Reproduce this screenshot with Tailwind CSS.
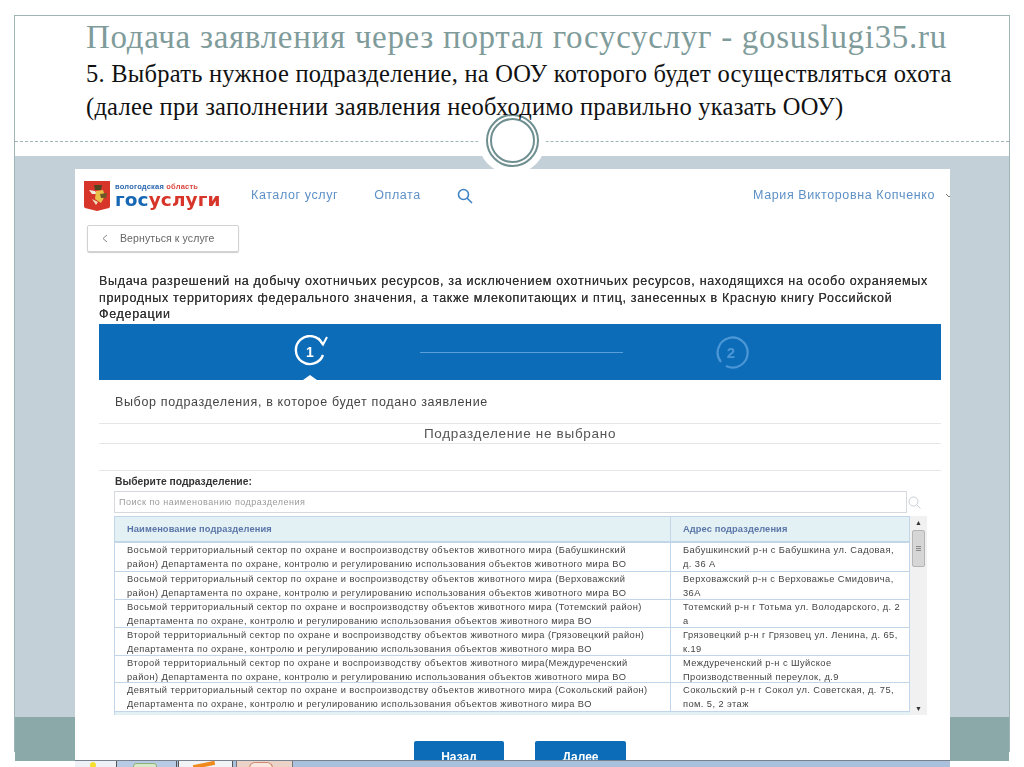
<!DOCTYPE html>
<html lang="ru">
<head>
  <meta charset="UTF-8" />
  <title>Подача заявления через портал госуслуг</title>
  <script src="https://cdn.jsdelivr.net/npm/@tailwindcss/browser@4"></script>
</head>
<body class="bg-white font-['Liberation_Sans',sans-serif] overflow-hidden">
  <div class="relative w-[1024px] h-[767px] overflow-hidden pt-[15px] pl-[14px]">

    <!-- Слайд -->
    <div class="w-[996px] h-[737px] border-x border-t border-[#9fb4b6] flex flex-col">
      <header class="relative z-10 h-[125px] shrink-0 pl-[71px] pt-[2px] font-['Liberation_Serif',serif]">
        <h1 class="text-[#7f9c9b] text-[33px] leading-[38px] tracking-[0.7px] whitespace-nowrap">Подача заявления через портал госусуслуг - gosuslugi35.ru</h1>
        <p class="text-[#111] text-[24.5px] leading-[33px] mt-[1px] tracking-[0.25px] whitespace-nowrap">5. Выбрать нужное подразделение, на ООУ которого будет осуществляться охота<br>(далее при заполнении заявления необходимо правильно указать ООУ)</p>
      </header>
      <div class="h-[15px] shrink-0 border-b border-dashed border-[#9fb4b6] -translate-y-[14px]"></div>

      <!-- Фон с карточкой сайта -->
      <div class="flex-1 pl-[60px] pt-[13px] bg-[linear-gradient(#c4d0d7_0,#c4d0d7_561px,#8ba9a9_561px)]">
        <div class="w-[875px] h-[592px] bg-white blur-[0.4px] text-[#444]">

          <!-- Шапка госуслуг -->
          <div class="h-[56px] pb-[3px] flex items-center pl-[9px] text-[12.5px] tracking-[0.6px] text-[#5d90c6]">
            <svg width="26" height="30" viewBox="0 0 26 30" class="shrink-0">
              <path d="M0 0H26V25Q26 27 23 27.5L13 30L3 27.5Q0 27 0 25Z" fill="#d8352a"/>
              <path d="M5 9L11 10L13 13L8 13Z" fill="#f3ece0"/>
              <path d="M10 4H18L17 9H11Z" fill="#4e4420"/>
              <path d="M12 10L19 9L21 15L17 22L11 18Z" fill="#e8c04a"/>
              <path d="M16 13L23 12L22 17L17 17Z" fill="#6b5a28"/>
              <path d="M8 18L14 21L12 24Z" fill="#f0dfc0"/>
            </svg>
            <div class="ml-[5px] w-[136px] shrink-0 -mt-[1px]">
              <div class="text-[7.5px] leading-[9px] font-bold tracking-[0.2px] whitespace-nowrap"><span class="text-[#2a66ae]">вологодская</span> <span class="text-[#d9463e]">область</span></div>
              <div class="font-['DejaVu_Sans',sans-serif] text-[18.5px] leading-[18px] font-bold tracking-[0.1px] whitespace-nowrap"><span class="text-[#1768b4]">гос</span><span class="text-[#d8352a]">услуги</span></div>
            </div>
            <span class="whitespace-nowrap">Каталог услуг</span>
            <span class="ml-[36px]">Оплата</span>
            <svg width="16" height="16" viewBox="0 0 16 16" fill="none" stroke="#3f83c4" stroke-width="1.6" class="ml-[36px]">
              <circle cx="6.5" cy="6.5" r="5"/><path d="M10 10L15 15"/>
            </svg>
            <span class="ml-auto whitespace-nowrap">Мария Викторовна Копченко</span>
            <svg width="5" height="8" viewBox="0 0 5 8" fill="none" stroke="#777" class="ml-[10px]"><path d="M1 2L4 5L7 2"/></svg>
          </div>

          <!-- Назад -->
          <div class="ml-[12px] w-[152px] h-[27px] flex items-center border border-[#d2d2d2] rounded-[2px] shadow-[0_1px_1px_#ccc] text-[10.5px] tracking-[0.1px] text-[#666]">
            <svg width="6" height="9" viewBox="0 0 6 9" fill="none" stroke="#888" class="ml-[14px]"><path d="M5 1L1 4.5L5 8"/></svg>
            <span class="ml-[12px]">Вернуться к услуге</span>
          </div>

          <div class="ml-[24px] w-[842px]">
            <p class="mt-[21px] h-[51px] text-[12.5px] leading-[16.5px] font-medium tracking-[0.68px] text-[#333] [text-shadow:0_0_0.4px_#333] whitespace-nowrap">Выдача разрешений на добычу охотничьих ресурсов, за исключением охотничьих ресурсов, находящихся на особо охраняемых<br>природных территориях федерального значения, а также млекопитающих и птиц, занесенных в Красную книгу Российской<br>Федерации</p>

            <!-- Шаги -->
            <div class="relative h-[56px] bg-[#0d6cb8] flex items-center">
              <svg width="36" height="34" viewBox="0 0 36 34" fill="none" stroke="#fff" stroke-width="2.4" class="ml-[193px] -mt-[1px]">
                <path d="M31 20A14 14 0 1 1 30.5 9"/>
                <path d="M26.5 3L31 9.5L35 2" stroke-width="2"/>
                <text x="18" y="21.5" font-size="14" font-weight="700" fill="#fff" stroke="none" text-anchor="middle" font-family="Liberation Sans">1</text>
              </svg>
              <div class="ml-[92px] w-[203px] h-[1px] bg-[#5b9fd8]"></div>
              <svg width="36" height="36" viewBox="0 0 36 36" fill="none" stroke="#4b97d6" stroke-width="2.2" class="ml-[90px]">
                <path d="M8 28A15 15 0 1 1 13 32"/>
                <text x="18" y="23.5" font-size="15" font-weight="700" fill="#4b97d6" stroke="none" text-anchor="middle" font-family="Liberation Sans">2</text>
              </svg>
              <div class="absolute left-[204px] bottom-0 w-0 h-0 border-x-[7px] border-x-transparent border-b-[5px] border-b-white"></div>
            </div>

            <p class="h-[43px] pl-[16px] pt-[15px] text-[12.5px] leading-[14px] tracking-[0.65px] text-[#444]">Выбор подразделения, в которое будет подано заявление</p>
            <div class="h-[21px] border-y border-[#e6e6e6] text-center text-[13.5px] leading-[20px] tracking-[0.7px] text-[#555]">Подразделение не выбрано</div>
            <div class="h-[27px] border-b border-[#e6e6e6]"></div>

            <div class="pl-[16px] mt-[6px] text-[10.3px] leading-[10px] font-bold text-[#333]">Выберите подразделение:</div>

            <!-- Поиск -->
            <div class="flex items-center mt-[4px] ml-[15px]">
              <div class="w-[793px] h-[22px] border border-[#d5d9dd] pl-[4px] text-[9px] leading-[20px] tracking-[0.5px] text-[#9a9a9a]">Поиск по наименованию подразделения</div>
              <svg width="13" height="13" viewBox="0 0 13 13" fill="none" stroke="#c8d0d6" class="ml-[1px]"><circle cx="5.5" cy="5.5" r="4.5"/><path d="M9 9L12.5 12.5"/></svg>
            </div>

            <!-- Таблица -->
            <div class="flex ml-[15px] mt-[3px] h-[199px] overflow-hidden">
              <div class="w-[796px]">
                <div class="h-[27px] flex bg-[#e3f0f4] border border-[#c2d6ea] border-b-2 text-[9.3px] leading-[24px] font-bold tracking-[0.1px] text-[#5a76a8]">
                  <div class="w-[556px] pl-[12px] border-r border-[#c2d6ea]">Наименование подразделения</div>
                  <div class="pl-[12px]">Адрес подразделения</div>
                </div>
                <div id="rows"></div>
                <div class="h-[4px] bg-[#e3f0f4] border-l border-[#c2d6ea]"></div>
              </div>
              <!-- Скролл -->
              <div class="w-[17px] bg-[#f1f1f1] flex flex-col items-center">
                <div class="text-[7px] leading-[14px] text-[#333]">▲</div>
                <div class="w-[13px] h-[37px] bg-[#d6d6d6] border border-[#b5b5b5] rounded-[2px] flex flex-col justify-center gap-[1px] px-[3px]">
                  <div class="h-[1px] bg-[#888]"></div><div class="h-[1px] bg-[#888]"></div><div class="h-[1px] bg-[#888]"></div>
                </div>
                <div class="mt-auto text-[7px] leading-[12px] text-[#333]">▼</div>
              </div>
            </div>

            <!-- Кнопки -->
            <div class="flex gap-[31px] ml-[315px] mt-[26px]">
              <div class="w-[90px] h-[40px] bg-[#0d6cb8] rounded-t-[2px] text-white text-[12px] leading-[14px] font-bold text-center pt-[9px]">Назад</div>
              <div class="w-[91px] h-[40px] bg-[#0d6cb8] rounded-t-[2px] text-white text-[12px] leading-[14px] font-bold text-center pt-[9px]">Далее</div>
            </div>
          </div>
        </div>
      </div>
    </div>

    <!-- Кольцо поверх разделителя -->
    <div class="absolute left-[478px] top-[106px] w-[68px] h-[68px] rounded-full bg-white flex items-center justify-center">
      <div class="w-[53px] h-[53px] rounded-full border-[2.5px] border-[#6f8f90] p-[2px]">
        <div class="w-full h-full rounded-full border-[2px] border-[#6f8f90]"></div>
      </div>
    </div>

    <!-- Панель задач -->
    <div class="absolute left-[75px] top-[760px] w-[875px] h-[7px] flex bg-[#a9c1dd] border-t border-[#77828e] overflow-hidden">
      <div class="w-[42px] bg-[#eef2f6] border-r border-[#555] relative"><div class="absolute left-[15px] top-[1px] w-[6px] h-[6px] rounded-full bg-[#f5e030]"></div></div>
      <div class="w-[60px] bg-[#b7cbe4] border-r border-[#555] relative"><div class="absolute left-[16px] top-[2px] w-[24px] h-[6px] rounded-t-[3px] bg-[#d5e8c8] border border-[#8db07a]"></div></div>
      <div class="w-[55px] ml-[1px] bg-[#f1f3f6] border-x border-[#555] relative"><div class="absolute left-[14px] top-[2px] w-[22px] h-[4px] -rotate-12 bg-[#f08a1c]"></div></div>
      <div class="w-[57px] ml-[3px] bg-[#ecd3c8] border-x border-[#777] relative"><div class="absolute left-[12px] top-[1px] w-[24px] h-[6px] rounded-t-[6px] border border-[#d08a70] bg-[#f8e8e0]"></div></div>
    </div>
  </div>

  <script>
    const units = [
      ['Восьмой территориальный сектор по охране и воспроизводству объектов животного мира (Бабушкинский', 'район) Департамента по охране, контролю и регулированию использования объектов животного мира ВО', 'Бабушкинский р-н с Бабушкина ул. Садовая,', 'д. 36 А', 29],
      ['Восьмой территориальный сектор по охране и воспроизводству объектов животного мира (Верховажский', 'район) Департамента по охране, контролю и регулированию использования объектов животного мира ВО', 'Верховажский р-н с Верховажье Смидовича,', '36А', 28],
      ['Восьмой территориальный сектор по охране и воспроизводству объектов животного мира (Тотемский район)', 'Департамента по охране, контролю и регулированию использования объектов животного мира ВО', 'Тотемский р-н г Тотьма ул. Володарского, д. 2', 'а', 28],
      ['Второй территориальный сектор по охране и воспроизводству объектов животного мира (Грязовецкий район)', 'Департамента по охране, контролю и регулированию использования объектов животного мира ВО', 'Грязовецкий р-н г Грязовец ул. Ленина, д. 65,', 'к.19', 28],
      ['Второй территориальный сектор по охране и воспроизводству объектов животного мира(Междуреченский', 'район) Департамента по охране, контролю и регулированию использования объектов животного мира ВО', 'Междуреченский р-н с Шуйское', 'Производственный переулок, д.9', 27],
      ['Девятый территориальный сектор по охране и воспроизводству объектов животного мира (Сокольский район)', 'Департамента по охране, контролю и регулированию использования объектов животного мира ВО', 'Сокольский р-н г Сокол ул. Советская, д. 75,', 'пом. 5, 2 этаж', 29]
    ];

    document.getElementById('rows').innerHTML = units.map(u => `
      <div class="flex border-x border-b border-[#c2d6ea] text-[9.3px] leading-[14px] tracking-[0.42px] text-[#444] whitespace-nowrap" style="height:${u[4]}px">
        <div class="w-[556px] pl-[12px] border-r border-[#c2d6ea]">${u[0]}<br>${u[1]}</div>
        <div class="pl-[12px]">${u[2]}<br>${u[3]}</div>
      </div>`).join('');
  </script>
</body>
</html>
